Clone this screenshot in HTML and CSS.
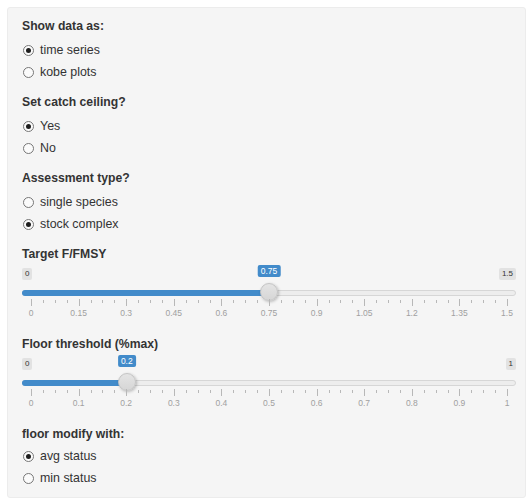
FILE: index.html
```html
<!DOCTYPE html>
<html>
<head>
<meta charset="utf-8">
<link rel="stylesheet" href="styles.css">
</head>
<body>
<form class="well">
  <div class="group">
    <div class="glabel">Show data as:</div>
    <label class="radio"><span class="rb on"></span>time series</label>
    <label class="radio"><span class="rb"></span>kobe plots</label>
  </div>
  <div class="group">
    <div class="glabel">Set catch ceiling?</div>
    <label class="radio"><span class="rb on"></span>Yes</label>
    <label class="radio"><span class="rb"></span>No</label>
  </div>
  <div class="group">
    <div class="glabel">Assessment type?</div>
    <label class="radio"><span class="rb"></span>single species</label>
    <label class="radio"><span class="rb on"></span>stock complex</label>
  </div>

  <div class="group slider-group">
    <div class="glabel">Target F/FMSY</div>
    <div class="irs">
      <div class="irs-minmax"><span class="mm">0</span><span class="mm">1.5</span></div>
      <div class="irs-line">
        <div class="irs-bar" style="width: calc(0.5 * (100% - 18px) + 9px)"></div>
        <div class="irs-handle" style="left: calc(0.5 * (100% - 18px))">
          <span class="irs-single">0.75</span>
        </div>
      </div>
      <div class="irs-grid" id="grid1"></div>
    </div>
  </div>

  <div class="group slider-group">
    <div class="glabel">Floor threshold (%max)</div>
    <div class="irs">
      <div class="irs-minmax"><span class="mm">0</span><span class="mm">1</span></div>
      <div class="irs-line">
        <div class="irs-bar" style="width: calc(0.2 * (100% - 18px) + 9px)"></div>
        <div class="irs-handle" style="left: calc(0.2 * (100% - 18px))">
          <span class="irs-single">0.2</span>
        </div>
      </div>
      <div class="irs-grid" id="grid2"></div>
    </div>
  </div>

  <div class="group last">
    <div class="glabel">floor modify with:</div>
    <label class="radio"><span class="rb on"></span>avg status</label>
    <label class="radio"><span class="rb"></span>min status</label>
  </div>
</form>
<script src="grid.js"></script>
</body>
</html>
```

FILE: grid.js
```js
// Build the tick marks and value labels under each slider track.
function buildGrid(el, max, step, minorPerMajor) {
  var majors = Math.round(max / step);
  var total = majors * minorPerMajor;
  for (var i = 0; i <= total; i++) {
    var pct = (i / total) * 100;
    var tick = document.createElement('span');
    var isMajor = i % minorPerMajor === 0;
    tick.className = isMajor ? 'tick major' : 'tick';
    tick.style.left = pct + '%';
    el.appendChild(tick);
    if (isMajor) {
      var v = (i / minorPerMajor) * step;
      var lab = document.createElement('span');
      lab.className = 'tick-label';
      lab.style.left = pct + '%';
      lab.textContent = String(Math.round(v * 100) / 100);
      el.appendChild(lab);
    }
  }
}
buildGrid(document.getElementById('grid1'), 1.5, 0.15, 4);
buildGrid(document.getElementById('grid2'), 1, 0.1, 4);
```

FILE: styles.css
```css
html, body {
  margin: 0;
  padding: 0;
  background: #ffffff;
}

body {
  font-family: "Liberation Sans", Arial, sans-serif;
  color: #333333;
  padding: 7px 1px 2px 7px;
}

.well {
  display: block;
  margin: 0;
  background: #f5f5f5;
  border: 1px solid #ececec;
  border-radius: 3px;
  padding: 10px 9px 8px 14px;
  height: 491px;
  box-sizing: border-box;
}

.group {
  margin-bottom: 11px;
}

.glabel {
  font-weight: bold;
  font-size: 12.2px;
  line-height: 16px;
  height: 16px;
  margin-bottom: 5px;
}

.group.last .glabel {
  margin-bottom: 3px;
}

.radio {
  display: flex;
  align-items: center;
  height: 22px;
  font-size: 12.4px;
  line-height: 22px;
}

.rb {
  width: 11px;
  height: 11px;
  box-sizing: border-box;
  border: 1px solid #767676;
  border-radius: 50%;
  background: #fbfbfb;
  margin: 0 6px 0 1px;
  position: relative;
  flex: none;
}

.rb.on::after {
  content: "";
  position: absolute;
  left: 2px;
  top: 2px;
  width: 5px;
  height: 5px;
  border-radius: 50%;
  background: #1e1e1e;
}

/* slider */
.slider-group .glabel {
  margin-bottom: 0;
}

.slider-group {
  margin-bottom: 13px;
}

.irs {
  position: relative;
}

.irs-minmax {
  display: flex;
  justify-content: space-between;
  margin-top: 6px;
  height: 12px;
}

.mm {
  font-size: 8px;
  line-height: 12px;
  padding: 0 3px;
  background: #e2e2e2;
  color: #333333;
  border-radius: 2px;
}

.irs-line {
  position: relative;
  margin-top: 10px;
  height: 6px;
  box-sizing: border-box;
  border: 1px solid #d6d6d6;
  border-radius: 3px;
  background: #ededed;
}

.irs-bar {
  position: absolute;
  left: -1px;
  top: -1px;
  height: 6px;
  background: #428bca;
  border-radius: 3px 0 0 3px;
}

.irs-handle {
  position: absolute;
  top: -8px;
  width: 18px;
  height: 18px;
  box-sizing: border-box;
  border-radius: 50%;
  border: 1px solid #c4c4c4;
  background: linear-gradient(#e4e4e4, #d6d6d6);
  box-shadow: 1px 1px 3px rgba(0, 0, 0, 0.25);
}

.irs-single {
  position: absolute;
  left: 50%;
  top: -19px;
  transform: translateX(-50%);
  background: #428bca;
  color: #ffffff;
  font-size: 8.5px;
  line-height: 12px;
  padding: 0 3px;
  border-radius: 2px;
  white-space: nowrap;
}

.irs-grid {
  position: relative;
  margin: 0 9px;
  height: 27px;
}

.tick {
  position: absolute;
  top: 4px;
  width: 1px;
  height: 3px;
  background: #b8b8b8;
}

.tick.major {
  height: 7px;
  top: 3px;
}

.tick-label {
  position: absolute;
  top: 12px;
  transform: translateX(-50%);
  font-size: 8.5px;
  line-height: 10px;
  color: #a0a0a0;
  white-space: nowrap;
}
```
